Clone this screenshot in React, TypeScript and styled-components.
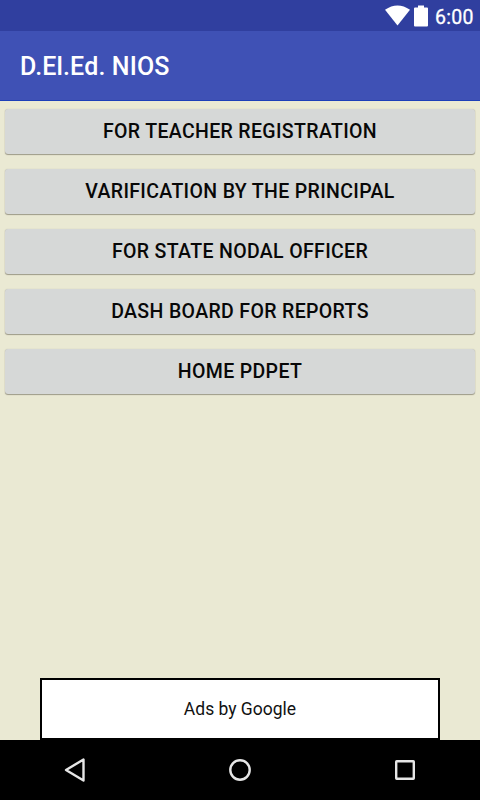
import React from 'react';
import styled, { createGlobalStyle } from 'styled-components';

const GlobalStyle = createGlobalStyle`
  * { box-sizing: border-box; }
  body { margin: 0; font-family: Roboto, sans-serif; }
`;

const Screen = styled.div`
  width: 480px;
  height: 800px;
  display: flex;
  flex-direction: column;
  overflow: hidden;
  background: #eae9d3;
`;

const StatusBar = styled.div`
  height: 31px;
  flex: none;
  display: flex;
  align-items: center;
  justify-content: flex-end;
  padding-right: 6px;
  background: #303f9f;
  color: #fff;
`;

const StatusIcon = styled.svg`
  display: block;
  flex: none;
  margin-right: 4px;
`;

const Clock = styled.span`
  width: 39px;
  font-size: 19.5px;
  font-weight: 400;
  line-height: 24px;
  letter-spacing: 0.3px;
  margin: 4px 0 0 3px;
  -webkit-text-stroke: 0.3px #fff;
`;

const Toolbar = styled.header`
  height: 70px;
  flex: none;
  display: flex;
  align-items: center;
  padding: 2px 0 0 20px;
  border-bottom: 1px solid #1d3fb8;
  background: #3f51b5;
`;

const Title = styled.h1`
  margin: 0;
  color: #fff;
  font-size: 25px;
  font-weight: 500;
  line-height: 30px;
  letter-spacing: 0.15px;
`;

const Menu = styled.main`
  flex: 1;
  display: flex;
  flex-direction: column;
  gap: 15px;
  padding: 8px 5px 0;
`;

const MenuButton = styled.button`
  height: 45px;
  border: 0;
  border-radius: 3px;
  padding: 0;
  background: #d6d8d7;
  box-shadow: 0 1px 1px rgba(70, 65, 50, 0.45), 0 0 1px rgba(90, 85, 70, 0.3);
  color: #080808;
  font: 500 19.5px/24px Roboto, sans-serif;
  letter-spacing: 0.35px;
`;

const AdBanner = styled.div`
  flex: none;
  width: 400px;
  height: 62px;
  align-self: center;
  display: flex;
  align-items: center;
  justify-content: center;
  border: 2px solid #000;
  padding-bottom: 1px;
  background: #fff;
  color: #111;
  font-size: 17.5px;
`;

const NavBar = styled.nav`
  height: 60px;
  flex: none;
  display: grid;
  grid-template-columns: repeat(3, 165px);
  justify-content: center;
  align-items: center;
  justify-items: center;
  background: #000;
`;

const items = [
  'FOR TEACHER REGISTRATION',
  'VARIFICATION BY THE PRINCIPAL',
  'FOR STATE NODAL OFFICER',
  'DASH BOARD FOR REPORTS',
  'HOME PDPET',
];

export default function App() {
  return (
    <Screen>
      <GlobalStyle />
      <StatusBar>
        <StatusIcon width="25" height="22" viewBox="0 0 25 22">
          <path d="M12.500 20.500 L0 4.800 Q12.500 -3.800 25 4.800 Z" fill="#fff" />
        </StatusIcon>
        <StatusIcon width="14" height="22" viewBox="0 0 14 22">
          <path d="M4 0.500h6v2h3q1 0 1 1v17q0 1-1 1H1q-1 0-1-1v-17q0-1 1-1h3z" fill="#fff" />
        </StatusIcon>
        <Clock>6:00</Clock>
      </StatusBar>
      <Toolbar>
        <Title>D.El.Ed. NIOS</Title>
      </Toolbar>
      <Menu>
        {items.map((label) => (
          <MenuButton key={label}>{label}</MenuButton>
        ))}
      </Menu>
      <AdBanner>Ads by Google</AdBanner>
      <NavBar>
        <svg width="30" height="30" viewBox="0 0 30 30" fill="none" stroke="#e6e6e6" strokeWidth="2.400">
          <path d="M23.500 4.500V25.500L6 15Z" strokeLinejoin="round" />
        </svg>
        <svg width="30" height="30" viewBox="0 0 30 30" fill="none" stroke="#e6e6e6" strokeWidth="2.400">
          <circle cx="15" cy="15" r="9.700" />
        </svg>
        <svg width="30" height="30" viewBox="0 0 30 30" fill="none" stroke="#e6e6e6" strokeWidth="2.400">
          <rect x="6.200" y="6.200" width="17.600" height="17.600" rx="0.500" />
        </svg>
      </NavBar>
    </Screen>
  );
}
